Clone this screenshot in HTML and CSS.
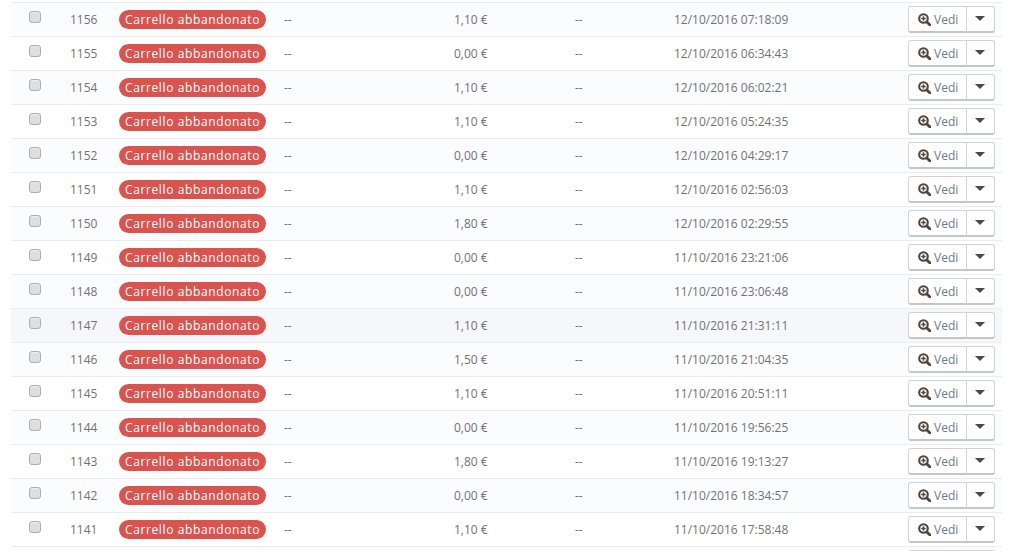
FILE: index.html
```html
<!DOCTYPE html>
<html lang="it">
<head>
    <meta charset="UTF-8">
    <title>Ordini</title>
    <link rel="stylesheet" href="styles.css">
</head>
<body>
<svg class="defs">
    <symbol id="zoom" viewBox="0 0 14 14">
        <circle cx="5.9" cy="5.9" r="4.6" fill="none" stroke="currentColor" stroke-width="2.3"/>
        <path d="M9.6 9.6 13 13" stroke="currentColor" stroke-width="3" stroke-linecap="round"/>
        <path d="M3.5 5.9h4.8M5.9 3.5v4.8" stroke="currentColor" stroke-width="1.6"/>
    </symbol>
</svg>
<div class="page">
<table class="orders">
    <colgroup>
        <col class="c-check"><col class="c-id"><col class="c-state"><col class="c-client">
        <col class="c-total"><col class="c-pay"><col class="c-date"><col class="c-actions">
    </colgroup>
    <tbody>
    <tr><td class="check"><input type="checkbox"></td><td>1156</td><td><span class="badge">Carrello abbandonato</span></td><td>--</td><td>1,10 €</td><td>--</td><td>12/10/2016 07:18:09</td><td class="actions"><div class="btn-group"><a class="btn"><svg class="icon"><use href="#zoom"/></svg> Vedi</a><a class="btn caret-btn"><span class="caret"></span></a></div></td></tr>
    <tr><td class="check"><input type="checkbox"></td><td>1155</td><td><span class="badge">Carrello abbandonato</span></td><td>--</td><td>0,00 €</td><td>--</td><td>12/10/2016 06:34:43</td><td class="actions"><div class="btn-group"><a class="btn"><svg class="icon"><use href="#zoom"/></svg> Vedi</a><a class="btn caret-btn"><span class="caret"></span></a></div></td></tr>
    <tr><td class="check"><input type="checkbox"></td><td>1154</td><td><span class="badge">Carrello abbandonato</span></td><td>--</td><td>1,10 €</td><td>--</td><td>12/10/2016 06:02:21</td><td class="actions"><div class="btn-group"><a class="btn"><svg class="icon"><use href="#zoom"/></svg> Vedi</a><a class="btn caret-btn"><span class="caret"></span></a></div></td></tr>
    <tr><td class="check"><input type="checkbox"></td><td>1153</td><td><span class="badge">Carrello abbandonato</span></td><td>--</td><td>1,10 €</td><td>--</td><td>12/10/2016 05:24:35</td><td class="actions"><div class="btn-group"><a class="btn"><svg class="icon"><use href="#zoom"/></svg> Vedi</a><a class="btn caret-btn"><span class="caret"></span></a></div></td></tr>
    <tr><td class="check"><input type="checkbox"></td><td>1152</td><td><span class="badge">Carrello abbandonato</span></td><td>--</td><td>0,00 €</td><td>--</td><td>12/10/2016 04:29:17</td><td class="actions"><div class="btn-group"><a class="btn"><svg class="icon"><use href="#zoom"/></svg> Vedi</a><a class="btn caret-btn"><span class="caret"></span></a></div></td></tr>
    <tr><td class="check"><input type="checkbox"></td><td>1151</td><td><span class="badge">Carrello abbandonato</span></td><td>--</td><td>1,10 €</td><td>--</td><td>12/10/2016 02:56:03</td><td class="actions"><div class="btn-group"><a class="btn"><svg class="icon"><use href="#zoom"/></svg> Vedi</a><a class="btn caret-btn"><span class="caret"></span></a></div></td></tr>
    <tr><td class="check"><input type="checkbox"></td><td>1150</td><td><span class="badge">Carrello abbandonato</span></td><td>--</td><td>1,80 €</td><td>--</td><td>12/10/2016 02:29:55</td><td class="actions"><div class="btn-group"><a class="btn"><svg class="icon"><use href="#zoom"/></svg> Vedi</a><a class="btn caret-btn"><span class="caret"></span></a></div></td></tr>
    <tr><td class="check"><input type="checkbox"></td><td>1149</td><td><span class="badge">Carrello abbandonato</span></td><td>--</td><td>0,00 €</td><td>--</td><td>11/10/2016 23:21:06</td><td class="actions"><div class="btn-group"><a class="btn"><svg class="icon"><use href="#zoom"/></svg> Vedi</a><a class="btn caret-btn"><span class="caret"></span></a></div></td></tr>
    <tr><td class="check"><input type="checkbox"></td><td>1148</td><td><span class="badge">Carrello abbandonato</span></td><td>--</td><td>0,00 €</td><td>--</td><td>11/10/2016 23:06:48</td><td class="actions"><div class="btn-group"><a class="btn"><svg class="icon"><use href="#zoom"/></svg> Vedi</a><a class="btn caret-btn"><span class="caret"></span></a></div></td></tr>
    <tr class="hover"><td class="check"><input type="checkbox"></td><td>1147</td><td><span class="badge">Carrello abbandonato</span></td><td>--</td><td>1,10 €</td><td>--</td><td>11/10/2016 21:31:11</td><td class="actions"><div class="btn-group"><a class="btn"><svg class="icon"><use href="#zoom"/></svg> Vedi</a><a class="btn caret-btn"><span class="caret"></span></a></div></td></tr>
    <tr><td class="check"><input type="checkbox"></td><td>1146</td><td><span class="badge">Carrello abbandonato</span></td><td>--</td><td>1,50 €</td><td>--</td><td>11/10/2016 21:04:35</td><td class="actions"><div class="btn-group"><a class="btn"><svg class="icon"><use href="#zoom"/></svg> Vedi</a><a class="btn caret-btn"><span class="caret"></span></a></div></td></tr>
    <tr><td class="check"><input type="checkbox"></td><td>1145</td><td><span class="badge">Carrello abbandonato</span></td><td>--</td><td>1,10 €</td><td>--</td><td>11/10/2016 20:51:11</td><td class="actions"><div class="btn-group"><a class="btn"><svg class="icon"><use href="#zoom"/></svg> Vedi</a><a class="btn caret-btn"><span class="caret"></span></a></div></td></tr>
    <tr><td class="check"><input type="checkbox"></td><td>1144</td><td><span class="badge">Carrello abbandonato</span></td><td>--</td><td>0,00 €</td><td>--</td><td>11/10/2016 19:56:25</td><td class="actions"><div class="btn-group"><a class="btn"><svg class="icon"><use href="#zoom"/></svg> Vedi</a><a class="btn caret-btn"><span class="caret"></span></a></div></td></tr>
    <tr><td class="check"><input type="checkbox"></td><td>1143</td><td><span class="badge">Carrello abbandonato</span></td><td>--</td><td>1,80 €</td><td>--</td><td>11/10/2016 19:13:27</td><td class="actions"><div class="btn-group"><a class="btn"><svg class="icon"><use href="#zoom"/></svg> Vedi</a><a class="btn caret-btn"><span class="caret"></span></a></div></td></tr>
    <tr><td class="check"><input type="checkbox"></td><td>1142</td><td><span class="badge">Carrello abbandonato</span></td><td>--</td><td>0,00 €</td><td>--</td><td>11/10/2016 18:34:57</td><td class="actions"><div class="btn-group"><a class="btn"><svg class="icon"><use href="#zoom"/></svg> Vedi</a><a class="btn caret-btn"><span class="caret"></span></a></div></td></tr>
    <tr><td class="check"><input type="checkbox"></td><td>1141</td><td><span class="badge">Carrello abbandonato</span></td><td>--</td><td>1,10 €</td><td>--</td><td>11/10/2016 17:58:48</td><td class="actions"><div class="btn-group"><a class="btn"><svg class="icon"><use href="#zoom"/></svg> Vedi</a><a class="btn caret-btn"><span class="caret"></span></a></div></td></tr>
    <tr><td class="check"></td><td></td><td></td><td></td><td></td><td></td><td></td><td class="actions"><div class="btn-group"><a class="btn"></a><a class="btn caret-btn"></a></div></td></tr>
    </tbody>
</table>
</div>
</body>
</html>
```

FILE: styles.css
```css
body {
    margin: 0;
    background-color: #fff;
    font-family: "Open Sans", sans-serif;
    font-size: 12px;
    color: #727272;
}

.defs {
    display: none;
}

.page {
    box-sizing: border-box;
    height: 551px;
    padding: 2px 11px 0;
    overflow: hidden;
}

.orders {
    width: 991px;
    table-layout: fixed;
    border-collapse: separate;
    border-spacing: 0;
    border-top: 1px solid #e9edf1;
}

.c-check { width: 48px; }
.c-id { width: 49px; }
.c-state { width: 165px; }
.c-client { width: 170px; }
.c-total { width: 121px; }
.c-pay { width: 99px; }
.c-date { width: 234px; }
.c-actions { width: 105px; }

.orders td {
    height: 33px;
    padding: 0 0 0 11px;
    border-bottom: 1px solid #e9edf1;
    white-space: nowrap;
}

.orders tr:nth-child(odd) td {
    background-color: #fbfcfe;
}

.orders tr.hover td {
    background-color: #f5f7fa;
}

.orders td.check {
    padding: 0;
    text-align: center;
}

.check input {
    appearance: none;
    display: block;
    box-sizing: border-box;
    width: 12px;
    height: 12px;
    margin: -5px auto 0;
    background-color: #dedede;
    border: 1px solid #aeaeae;
    border-radius: 3px;
    box-shadow: inset 0 1px 1px #efefef;
}

.badge {
    display: inline-block;
    height: 19px;
    padding: 0 6px;
    line-height: 19px;
    background-color: #d9534f;
    border-radius: 10px;
    color: #fff;
    font-weight: 500;
    letter-spacing: 0.62px;
    vertical-align: middle;
}

.orders td.actions {
    padding: 0 7px 0 0;
    text-align: right;
}

.btn-group {
    display: inline-flex;
    vertical-align: middle;
}

.btn {
    display: flex;
    align-items: center;
    box-sizing: border-box;
    width: 59px;
    height: 27px;
    padding-left: 9px;
    background-color: #fff;
    border: 1px solid #d3d3d3;
    border-bottom: 2px solid #c6c6c6;
    border-radius: 3px 0 0 3px;
    color: #6c7a8a;
    gap: 3px;
}

.caret-btn {
    width: 29px;
    margin-left: -1px;
    padding-left: 8px;
    border-radius: 0 3px 3px 0;
}

.icon {
    width: 13px;
    height: 13px;
    color: #4f473f;
}

.caret {
    width: 0;
    height: 0;
    margin-top: -1px;
    border-top: 5px solid #4a4a4a;
    border-left: 5px solid transparent;
    border-right: 5px solid transparent;
}
```
